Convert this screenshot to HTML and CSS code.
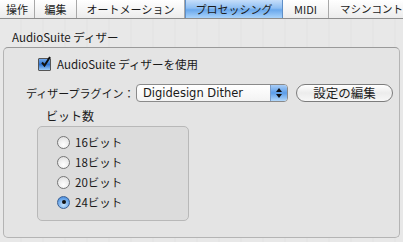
FILE: index.html
```html
<!DOCTYPE html>
<html lang="ja">
<head>
<meta charset="utf-8">
<link rel="stylesheet" href="styles.css">
</head>
<body>
<div class="tabs">
  <div class="tab t1">操作</div>
  <div class="tab t2">編集</div>
  <div class="tab t3">オートメーション</div>
  <div class="tab t4 sel">プロセッシング</div>
  <div class="tab t5">MIDI</div>
  <div class="tab t6">マシンコント</div>
</div>
<div class="page">
  <div class="section-title">AudioSuite ディザー</div>
  <div class="group">
    <div class="check-row">
      <span class="checkbox">
        <svg width="13" height="13" viewBox="0 0 13 13"><path d="M3 6.5 L5.5 9.5 L11 1" fill="none" stroke="#111" stroke-width="2"/></svg>
      </span>
      <span>AudioSuite ディザーを使用</span>
    </div>
    <div class="plugin-row">
      <span class="plugin-label">ディザープラグイン：</span>
      <div class="popup">
        <span class="popup-text">Digidesign Dither</span>
        <span class="popup-arrows">
          <svg width="8" height="12" viewBox="0 0 8 12"><path d="M4 1 L7 5 H1 Z M4 11 L7 7 H1 Z" fill="#111"/></svg>
        </span>
      </div>
      <div class="button">設定の編集</div>
    </div>
    <div class="bits-title">ビット数</div>
    <div class="bits-box">
      <div class="radio-row"><span class="radio"></span>16ビット</div>
      <div class="radio-row"><span class="radio"></span>18ビット</div>
      <div class="radio-row"><span class="radio"></span>20ビット</div>
      <div class="radio-row"><span class="radio on"></span>24ビット</div>
    </div>
  </div>
</div>
</body>
</html>
```
FILE: styles.css
```css
html, body {
  margin: 0;
  padding: 0;
}
body {
  width: 403px;
  height: 242px;
  overflow: hidden;
  background: #e9e9e9;
  font-family: "Noto Sans CJK JP", "DejaVu Sans", sans-serif;
  font-size: 11.5px;
  color: #1a1a1a;
}
.tabs {
  display: flex;
  height: 18px;
  border-bottom: 1px solid #8e8e8e;
  background: linear-gradient(#ffffff, #ececec);
  white-space: nowrap;
  overflow: hidden;
}
.tab {
  flex: none;
  height: 18px;
  line-height: 18px;
  text-align: center;
  border-right: 1px solid #a8a8a8;
  box-sizing: border-box;
  font-size: 11px;
}
.t1 { width: 35px; }
.t2 { width: 42px; }
.t3 { width: 108px; }
.t4 { width: 98px; }
.t5 { width: 46px; }
.t6 { width: 74px; text-align: left; padding-left: 11px; border-right: none; font-size: 10.5px; }
.tab.sel {
  background: linear-gradient(#c6defa 0%, #8fbff3 45%, #6aa8ec 55%, #a9d3fb 100%);
  border-right-color: #5e8fc8;
  border-left: 1px solid #5e8fc8;
}
.page {
  padding: 10px 3px 0 3px;
  background: repeating-linear-gradient(90deg, #e8e8e8 0 20px, #e5e5e5 20px 22px);
  height: 223px;
  box-sizing: border-box;
}
.section-title {
  padding-left: 9px;
  height: 16px;
  line-height: 16px;
}
.group {
  margin-top: 2px;
  width: 397px;
  height: 191px;
  box-sizing: border-box;
  border: 1px solid #b4b4b4;
  border-top-color: #9a9a9a;
  border-radius: 5px;
  background: #e4e4e4;
  padding-top: 9px;
}
.check-row {
  display: flex;
  align-items: center;
  padding-left: 34px;
  height: 14px;
  gap: 6px;
  white-space: nowrap;
}
.checkbox {
  width: 11px;
  height: 11px;
  border: 1px solid #555;
  background: linear-gradient(#6fa7ea, #2f74d3 50%, #9ccaf7);
  border-radius: 1px;
  position: relative;
  flex: none;
}
.checkbox svg {
  position: absolute;
  left: 0;
  top: -3px;
}
.plugin-row {
  display: flex;
  align-items: center;
  margin-top: 12px;
  padding-left: 22px;
  height: 19px;
  white-space: nowrap;
}
.plugin-label {
  flex: none;
  width: 110px;
  font-size: 11px;
}
.popup {
  flex: none;
  display: flex;
  width: 152px;
  height: 18px;
  box-sizing: border-box;
  border: 1px solid #8a8a8a;
  border-radius: 4px;
  background: linear-gradient(#ffffff, #f3f3f3);
  overflow: hidden;
}
.popup-text {
  flex: 1;
  padding-left: 6px;
  line-height: 16px;
  font-family: "DejaVu Sans", sans-serif;
  font-size: 11.5px;
}
.popup-arrows {
  width: 16px;
  border-left: 1px solid #7a9cc8;
  background: linear-gradient(#a9cdf6, #5c9de8 50%, #b3d8fb);
  display: flex;
  align-items: center;
  justify-content: center;
}
.button {
  flex: none;
  margin-left: 8px;
  width: 97px;
  height: 18px;
  box-sizing: border-box;
  border: 1px solid #7c7c7c;
  border-radius: 9px;
  background: linear-gradient(#ffffff, #ececec 50%, #f7f7f7);
  text-align: center;
  line-height: 16px;
  font-size: 12.5px;
}
.bits-title {
  margin-top: 6px;
  padding-left: 42px;
  height: 16px;
  line-height: 16px;
  font-size: 12px;
}
.bits-box {
  margin-left: 33px;
  margin-top: 2px;
  width: 152px;
  height: 95px;
  box-sizing: border-box;
  border: 1px solid #b8b8b8;
  border-radius: 5px;
  background: #dcdcdc;
  padding-top: 5px;
}
.radio-row {
  display: flex;
  align-items: center;
  padding-left: 19px;
  height: 20px;
  gap: 5px;
}
.radio {
  width: 11px;
  height: 11px;
  border: 1px solid #777;
  border-radius: 50%;
  background: radial-gradient(circle at 50% 70%, #ffffff, #dcdcdc);
  flex: none;
  position: relative;
}
.radio.on {
  border-color: #3a5f92;
  background: radial-gradient(circle at 50% 70%, #c7e3fc, #5d9de6 70%, #3b7dd3);
}
.radio.on::after {
  content: "";
  position: absolute;
  left: 3.5px;
  top: 3.5px;
  width: 4px;
  height: 4px;
  border-radius: 50%;
  background: #111;
}
```
